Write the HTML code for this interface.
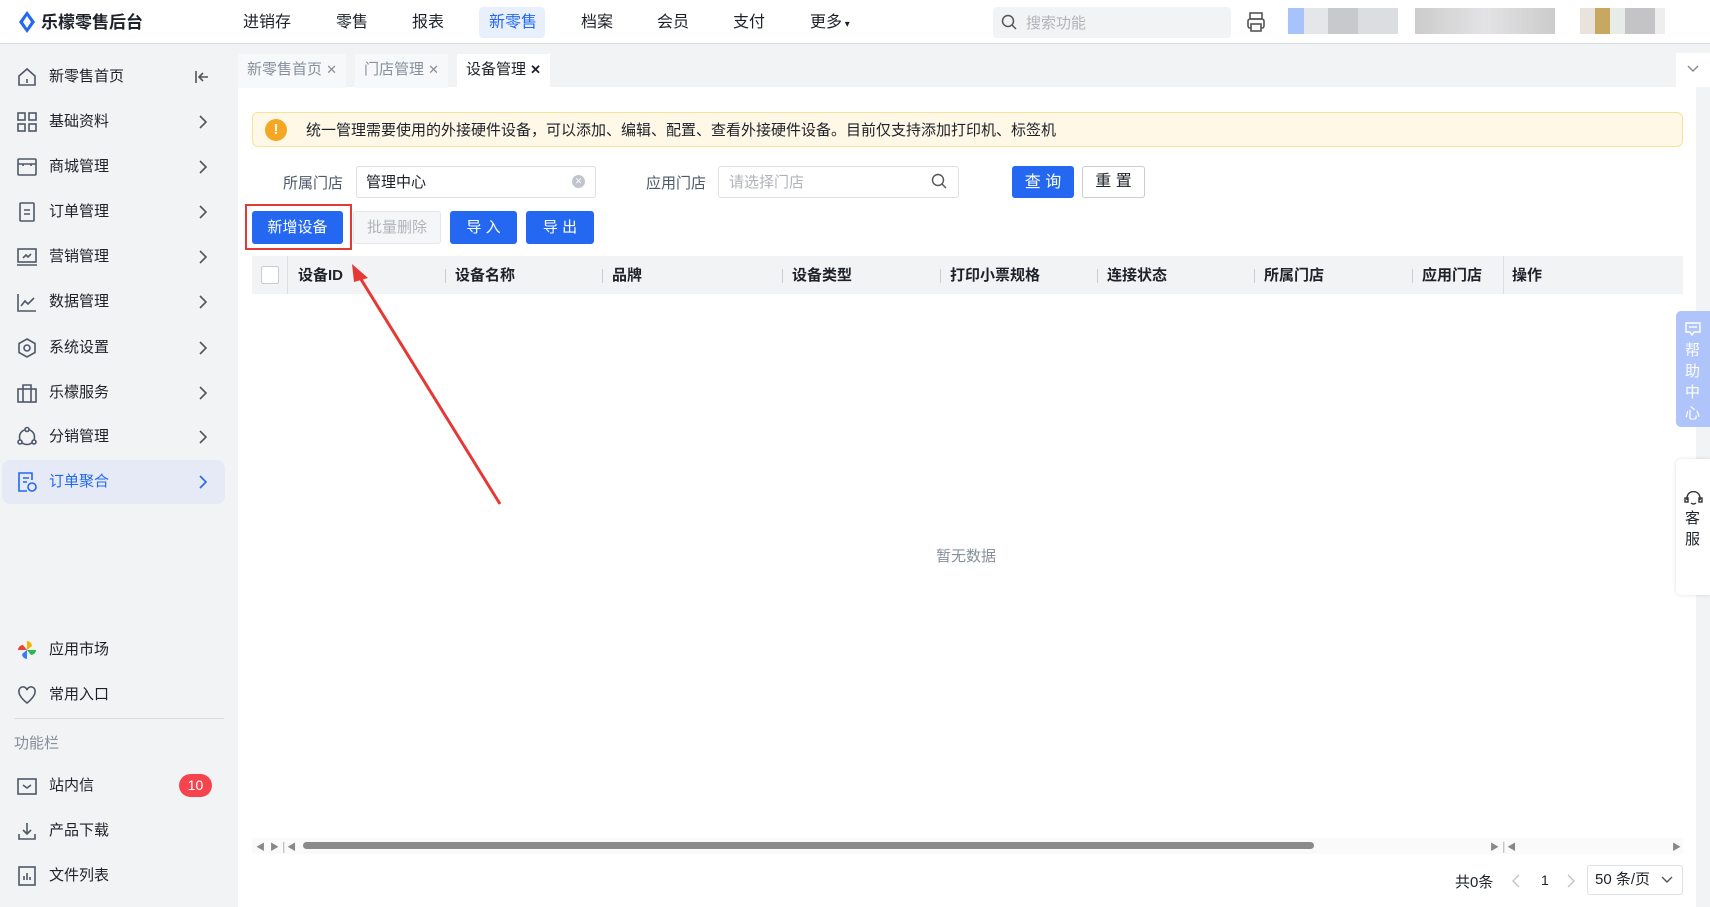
<!DOCTYPE html>
<html><head><meta charset="utf-8"><style>
*{margin:0;padding:0;box-sizing:border-box}
body{width:1710px;height:907px;overflow:hidden;background:#f2f3f5;font-family:"Liberation Sans","Noto Sans CJK SC",sans-serif;color:#1d2129;position:relative;font-size:15px}
.a{position:absolute}
.top{left:0;top:0;width:1710px;height:44px;background:#fff;border-bottom:1px solid #dcdee2}
.nav{top:1px;height:44px;line-height:44px;font-size:16px;color:#1d2129}
.side{left:0;top:44px;width:238px;height:863px;background:#f2f3f5}
.si{left:16px;height:24px;line-height:24px;font-size:15px;color:#1d2129;width:200px}
.si svg{position:absolute;left:0;top:1px}
.si span{position:absolute;left:33px}
.si svg.ch{left:182px;top:5px}
.main{left:238px;top:87px;width:1458px;height:820px;background:#fff}
.tab{top:54px;height:34px;line-height:32px;font-size:15px;padding:0 9px;background:#f7f8fa;color:#86909c}
.th{top:257px;height:38px;line-height:38px;font-size:15px;font-weight:bold;color:#1d2129}
.sep{top:269px;width:1px;height:14px;background:#c9cdd4}
.btn{height:33px;line-height:33px;text-align:center;font-size:15px;border-radius:3px}
</style></head><body>
<div class="a top"></div>
<svg class="a" style="left:18px;top:11px" width="18" height="22" viewBox="0 0 18 22"><path d="M9 0 L17 11 L9 22 L1 11Z" fill="#2468f2"/><path d="M9 5 L13 11 L9 17 L5 11Z" fill="#fff"/></svg>
<div class="a" style="left:41px;top:1px;line-height:44px;font-size:17px;font-weight:bold;color:#1d2129">乐檬零售后台</div>
<div class="a nav" style="left:243px">进销存</div>
<div class="a nav" style="left:336px">零售</div>
<div class="a nav" style="left:412px">报表</div>
<div class="a" style="left:479px;top:7px;width:66px;height:31px;background:#e8effd;border-radius:4px"></div>
<div class="a nav" style="left:489px;color:#2468f2">新零售</div>
<div class="a nav" style="left:581px">档案</div>
<div class="a nav" style="left:657px">会员</div>
<div class="a nav" style="left:733px">支付</div>
<div class="a nav" style="left:810px">更多<span style="font-size:10px"> ▾</span></div>
<div class="a" style="left:993px;top:7px;width:238px;height:31px;background:#f2f3f5;border-radius:4px"></div>
<svg class="a" style="left:1001px;top:14px" width="17" height="17" viewBox="0 0 17 17"><circle cx="7" cy="7" r="5.5" fill="none" stroke="#555" stroke-width="1.5"/><path d="M11 11l4 4" stroke="#555" stroke-width="1.5"/></svg>
<div class="a" style="left:1026px;top:8px;line-height:31px;font-size:15px;color:#b0b4ba">搜索功能</div>
<svg class="a" style="left:1246px;top:11px" width="20" height="22" viewBox="0 0 20 22"><rect x="4" y="2" width="12" height="6" fill="none" stroke="#555" stroke-width="1.6"/><rect x="2" y="8" width="16" height="9" rx="2" fill="none" stroke="#555" stroke-width="1.6"/><rect x="5" y="13" width="10" height="7" fill="#fff" stroke="#555" stroke-width="1.6"/></svg>
<div class="a" style="left:1288px;top:8px;width:110px;height:26px;background:linear-gradient(90deg,#a8c2fb 0 16px,#e4e6ea 16px 40px,#c8c9cc 40px 70px,#dcdde0 70px)"></div>
<div class="a" style="left:1415px;top:8px;width:140px;height:26px;background:linear-gradient(90deg,#ccc 0,#e3e3e5 50%,#ccc)"></div>
<div class="a" style="left:1580px;top:8px;width:85px;height:26px;background:linear-gradient(90deg,#e8e3dc 0 15px,#c8a860 15px 30px,#e8ece8 30px 45px,#c4c4c6 45px 75px,#eee 75px)"></div>

<div class="a side"></div>
<div class="a" style="left:2px;top:460px;width:223px;height:44px;background:#e5eaf6;border-radius:8px"></div>
<div class="a si" style="top:65px"><svg width="22" height="22" viewBox="0 0 22 22" fill="none" stroke="#4e5969" stroke-width="1.6"><path d="M3 10L11 3l8 7v9H3z"/><path d="M11 13v4"/></svg><span>新零售首页</span><svg class="ch" style="left:178px" width="16" height="14" viewBox="0 0 16 14" fill="none" stroke="#555" stroke-width="1.6"><path d="M2 1v12M14 7H5M9 3L5 7l4 4"/></svg></div>
<div class="a si" style="top:110px"><svg width="22" height="22" viewBox="0 0 22 22" fill="none" stroke="#4e5969" stroke-width="1.6"><rect x="2" y="2" width="7" height="7"/><rect x="13" y="2" width="7" height="7"/><rect x="2" y="13" width="7" height="7"/><rect x="13" y="13" width="7" height="7"/></svg><span>基础资料</span><svg class="ch" width="9" height="14" viewBox="0 0 9 14" fill="none" stroke="#555" stroke-width="1.6"><path d="M2 1l6 6-6 6"/></svg></div>
<div class="a si" style="top:155px"><svg width="22" height="22" viewBox="0 0 22 22" fill="none" stroke="#4e5969" stroke-width="1.6"><rect x="2" y="3" width="18" height="16" rx="1"/><path d="M2 8h18M7 8v2M15 8v2"/></svg><span>商城管理</span><svg class="ch" width="9" height="14" viewBox="0 0 9 14" fill="none" stroke="#555" stroke-width="1.6"><path d="M2 1l6 6-6 6"/></svg></div>
<div class="a si" style="top:200px"><svg width="22" height="22" viewBox="0 0 22 22" fill="none" stroke="#4e5969" stroke-width="1.6"><rect x="4" y="2" width="14" height="18" rx="1"/><path d="M8 9h6M8 13h6"/></svg><span>订单管理</span><svg class="ch" width="9" height="14" viewBox="0 0 9 14" fill="none" stroke="#555" stroke-width="1.6"><path d="M2 1l6 6-6 6"/></svg></div>
<div class="a si" style="top:245px"><svg width="22" height="22" viewBox="0 0 22 22" fill="none" stroke="#4e5969" stroke-width="1.6"><rect x="2" y="3" width="18" height="13"/><path d="M1 19h20M7 12l3-3 2 2 3-3"/></svg><span>营销管理</span><svg class="ch" width="9" height="14" viewBox="0 0 9 14" fill="none" stroke="#555" stroke-width="1.6"><path d="M2 1l6 6-6 6"/></svg></div>
<div class="a si" style="top:290px"><svg width="22" height="22" viewBox="0 0 22 22" fill="none" stroke="#4e5969" stroke-width="1.6"><path d="M2 3v17h18M5 15l4-5 3 3 6-6"/></svg><span>数据管理</span><svg class="ch" width="9" height="14" viewBox="0 0 9 14" fill="none" stroke="#555" stroke-width="1.6"><path d="M2 1l6 6-6 6"/></svg></div>
<div class="a si" style="top:336px"><svg width="22" height="22" viewBox="0 0 22 22" fill="none" stroke="#4e5969" stroke-width="1.6"><path d="M11 2l8 4.5v9L11 20l-8-4.5v-9z"/><circle cx="11" cy="11" r="3"/></svg><span>系统设置</span><svg class="ch" width="9" height="14" viewBox="0 0 9 14" fill="none" stroke="#555" stroke-width="1.6"><path d="M2 1l6 6-6 6"/></svg></div>
<div class="a si" style="top:381px"><svg width="22" height="22" viewBox="0 0 22 22" fill="none" stroke="#4e5969" stroke-width="1.6"><rect x="2" y="7" width="18" height="13"/><path d="M7 7V3h8v4M7 7v13M15 7v13"/></svg><span>乐檬服务</span><svg class="ch" width="9" height="14" viewBox="0 0 9 14" fill="none" stroke="#555" stroke-width="1.6"><path d="M2 1l6 6-6 6"/></svg></div>
<div class="a si" style="top:425px"><svg width="22" height="22" viewBox="0 0 22 22" fill="none" stroke="#4e5969" stroke-width="1.6"><circle cx="11" cy="11" r="7.5"/><circle cx="11" cy="3.5" r="2" fill="#f2f3f5"/><circle cx="4" cy="16" r="2" fill="#f2f3f5"/><circle cx="18" cy="16" r="2" fill="#f2f3f5"/></svg><span>分销管理</span><svg class="ch" width="9" height="14" viewBox="0 0 9 14" fill="none" stroke="#555" stroke-width="1.6"><path d="M2 1l6 6-6 6"/></svg></div>
<div class="a si" style="top:470px;color:#2468f2"><svg width="22" height="22" viewBox="0 0 22 22" fill="none" stroke="#2468f2" stroke-width="1.6"><path d="M16 9V2H3v18h8"/><path d="M7 7h6M7 11h4"/><circle cx="16" cy="16" r="4"/></svg><span>订单聚合</span><svg class="ch" width="9" height="14" viewBox="0 0 9 14" fill="none" stroke="#2468f2" stroke-width="1.6"><path d="M2 1l6 6-6 6"/></svg></div>

<div class="a si" style="top:638px"><svg width="22" height="22" viewBox="0 0 22 22"><path d="M11 11V2a5 5 0 0 1 5 5z" fill="#f5b400"/><path d="M11 11h9a5 5 0 0 1-5 5z" fill="#2db84d"/><path d="M11 11v9a5 5 0 0 1-5-5z" fill="#3a7cf5"/><path d="M11 11H2a5 5 0 0 1 5-5z" fill="#ef4136"/></svg><span>应用市场</span></div>
<div class="a si" style="top:683px"><svg width="22" height="22" viewBox="0 0 22 22" fill="none" stroke="#4e5969" stroke-width="1.6"><path d="M11 19S3 13 3 8a4 4 0 0 1 8-2 4 4 0 0 1 8 2c0 5-8 11-8 11z"/></svg><span>常用入口</span></div>
<div class="a" style="left:14px;top:718px;width:210px;height:1px;background:#d9dadd"></div>
<div class="a" style="left:14px;top:732px;font-size:15px;color:#86909c">功能栏</div>
<div class="a si" style="top:774px"><svg width="22" height="22" viewBox="0 0 22 22" fill="none" stroke="#4e5969" stroke-width="1.6"><rect x="2" y="4" width="18" height="15"/><path d="M7 10l4 3 4-3"/></svg><span>站内信</span></div>
<div class="a" style="left:179px;top:774px;width:33px;height:23px;background:#f5444d;border-radius:12px;color:#fff;font-size:14px;text-align:center;line-height:23px">10</div>
<div class="a si" style="top:819px"><svg width="22" height="22" viewBox="0 0 22 22" fill="none" stroke="#4e5969" stroke-width="1.6"><path d="M11 3v11M7 10l4 4 4-4M3 14v5h16v-5"/></svg><span>产品下载</span></div>
<div class="a si" style="top:864px"><svg width="22" height="22" viewBox="0 0 22 22" fill="none" stroke="#4e5969" stroke-width="1.6"><rect x="3" y="2" width="16" height="18"/><path d="M8 15v-4M11 15V8M14 15v-3"/></svg><span>文件列表</span></div>

<div class="a" style="left:238px;top:44px;width:1472px;height:863px;background:#f2f3f5"></div>
<div class="a main"></div>
<div class="a tab" style="left:238px">新零售首页 <span style="font-size:13px">✕</span></div>
<div class="a tab" style="left:355px">门店管理 <span style="font-size:13px">✕</span></div>
<div class="a tab" style="left:457px;background:#fff;color:#1d2129">设备管理 <span style="font-size:13px;font-weight:bold">✕</span></div>
<div class="a" style="left:1676px;top:53px;width:34px;height:34px;background:#fff"></div>
<svg class="a" style="left:1687px;top:65px" width="12" height="8" viewBox="0 0 12 8" fill="none" stroke="#888" stroke-width="1.4"><path d="M1 1l5 5 5-5"/></svg>

<div class="a" style="left:252px;top:112px;width:1431px;height:35px;background:#fff8e6;border:1px solid #f7e29a;border-radius:6px"></div>
<div class="a" style="left:265px;top:119px;width:22px;height:22px;border-radius:50%;background:#f5a623;color:#fff;font-weight:bold;text-align:center;line-height:22px;font-size:15px">!</div>
<div class="a" style="left:306px;top:113px;line-height:35px;font-size:15px">统一管理需要使用的外接硬件设备，可以添加、编辑、配置、查看外接硬件设备。目前仅支持添加打印机、标签机</div>

<div class="a" style="left:283px;top:168px;line-height:31px;font-size:15px;color:#4e5969">所属门店</div>
<div class="a" style="left:356px;top:166px;width:240px;height:32px;border:1px solid #dcdfe6;border-radius:3px;padding-left:9px;line-height:31px">管理中心</div>
<div class="a" style="left:572px;top:175px;width:13px;height:13px;border-radius:50%;background:#c0c4cc;color:#fff;font-size:9px;text-align:center;line-height:13px">✕</div>
<div class="a" style="left:646px;top:168px;line-height:31px;font-size:15px;color:#4e5969">应用门店</div>
<div class="a" style="left:718px;top:166px;width:241px;height:32px;border:1px solid #dcdfe6;border-radius:3px;padding-left:10px;line-height:31px;color:#b0b4ba">请选择门店</div>
<svg class="a" style="left:931px;top:173px" width="17" height="17" viewBox="0 0 17 17"><circle cx="7" cy="7" r="5.5" fill="none" stroke="#555" stroke-width="1.4"/><path d="M11 11l4 4" stroke="#555" stroke-width="1.4"/></svg>
<div class="a btn" style="left:1012px;top:166px;width:62px;height:32px;background:#2468f2;color:#fff;font-size:16px">查 询</div>
<div class="a btn" style="left:1082px;top:166px;width:63px;height:32px;border:1px solid #c9cdd4;color:#1d2129;line-height:30px;font-size:16px">重 置</div>

<div class="a" style="left:245px;top:204px;width:107px;height:46px;border:2px solid #e53935"></div>
<div class="a btn" style="left:252px;top:211px;width:91px;background:#2468f2;color:#fff">新增设备</div>
<div class="a btn" style="left:353px;top:211px;width:88px;background:#f5f6f7;border:1px solid #e5e6eb;color:#b0b4ba;line-height:31px">批量删除</div>
<div class="a btn" style="left:450px;top:211px;width:67px;background:#2468f2;color:#fff">导 入</div>
<div class="a btn" style="left:526px;top:211px;width:68px;background:#2468f2;color:#fff">导 出</div>

<div class="a" style="left:252px;top:256px;width:1431px;height:38px;background:#f2f3f5"></div>
<div class="a" style="left:287px;top:256px;width:1px;height:38px;background:#dcdee2"></div>
<div class="a" style="left:261px;top:266px;width:18px;height:18px;border:1px solid #c9cdd4;background:#fff;border-radius:2px"></div>
<div class="a th" style="left:298px">设备ID</div>
<div class="a sep" style="left:445px"></div><div class="a th" style="left:455px">设备名称</div>
<div class="a sep" style="left:602px"></div><div class="a th" style="left:612px">品牌</div>
<div class="a sep" style="left:782px"></div><div class="a th" style="left:792px">设备类型</div>
<div class="a sep" style="left:940px"></div><div class="a th" style="left:950px">打印小票规格</div>
<div class="a sep" style="left:1097px"></div><div class="a th" style="left:1107px">连接状态</div>
<div class="a sep" style="left:1254px"></div><div class="a th" style="left:1264px">所属门店</div>
<div class="a sep" style="left:1412px"></div><div class="a th" style="left:1422px">应用门店</div>
<div class="a" style="left:1503px;top:256px;width:1px;height:38px;background:#dcdee2"></div>
<div class="a th" style="left:1512px">操作</div>

<svg class="a" style="left:340px;top:260px" width="170" height="250"><path d="M160 244 L14 8" stroke="#e53935" stroke-width="3"/><path d="M12 4 L28 18 L14 22 Z" fill="#e53935"/></svg>

<div class="a" style="left:936px;top:545px;font-size:15px;color:#86909c">暂无数据</div>

<div class="a" style="left:252px;top:838px;width:1431px;height:16px;background:#fafafa"></div>
<div class="a" style="left:256px;top:840px;font-size:9px;color:#888">◀ &nbsp;▶ │◀</div>
<div class="a" style="left:303px;top:842px;width:1011px;height:7px;background:#8a8a8a;border-radius:4px"></div>
<div class="a" style="left:1490px;top:840px;font-size:9px;color:#888">▶ │◀</div>
<div class="a" style="left:1672px;top:840px;font-size:9px;color:#888">▶</div>

<div class="a" style="left:1455px;top:871px;font-size:15px">共0条</div>
<svg class="a" style="left:1512px;top:874px" width="8" height="14" viewBox="0 0 8 14" fill="none" stroke="#c0c4cc" stroke-width="1.4"><path d="M7 1L1 7l6 6"/></svg>
<div class="a" style="left:1541px;top:872px;font-size:14px">1</div>
<svg class="a" style="left:1567px;top:874px" width="8" height="14" viewBox="0 0 8 14" fill="none" stroke="#c0c4cc" stroke-width="1.4"><path d="M1 1l6 6-6 6"/></svg>
<div class="a" style="left:1587px;top:865px;width:96px;height:30px;border:1px solid #dcdfe6;border-radius:3px;padding-left:7px;line-height:28px;font-size:15px">50 条/页</div>
<svg class="a" style="left:1661px;top:876px" width="12" height="8" viewBox="0 0 12 8" fill="none" stroke="#555" stroke-width="1.4"><path d="M1 1l5 5 5-5"/></svg>

<div class="a" style="left:1676px;top:311px;width:34px;height:116px;background:#aec4fb;border-radius:5px 0 0 5px"></div>
<svg class="a" style="left:1685px;top:322px" width="16" height="14" viewBox="0 0 16 14" fill="none" stroke="#fff" stroke-width="1.4"><path d="M1 1h14v9H9l-2 3-2-3H1z"/><path d="M4 5h8"/></svg>
<div class="a" style="left:1685px;top:340px;width:17px;font-size:15px;line-height:21px;color:#fff">帮助中心</div>
<div class="a" style="left:1676px;top:459px;width:34px;height:136px;background:#fff;border-radius:5px 0 0 5px;box-shadow:0 0 4px rgba(0,0,0,.12)"></div>
<svg class="a" style="left:1684px;top:491px" width="19" height="16" viewBox="0 0 19 16" fill="none" stroke="#333" stroke-width="1.4"><path d="M3 9V7a6.5 6.5 0 0 1 13 0v2"/><rect x="1" y="7" width="3" height="4"/><rect x="15" y="7" width="3" height="4"/><path d="M7 12q2.5 2 5 0"/></svg>
<div class="a" style="left:1685px;top:508px;width:17px;font-size:15px;line-height:21px;color:#1d2129">客服</div>
</body></html>
